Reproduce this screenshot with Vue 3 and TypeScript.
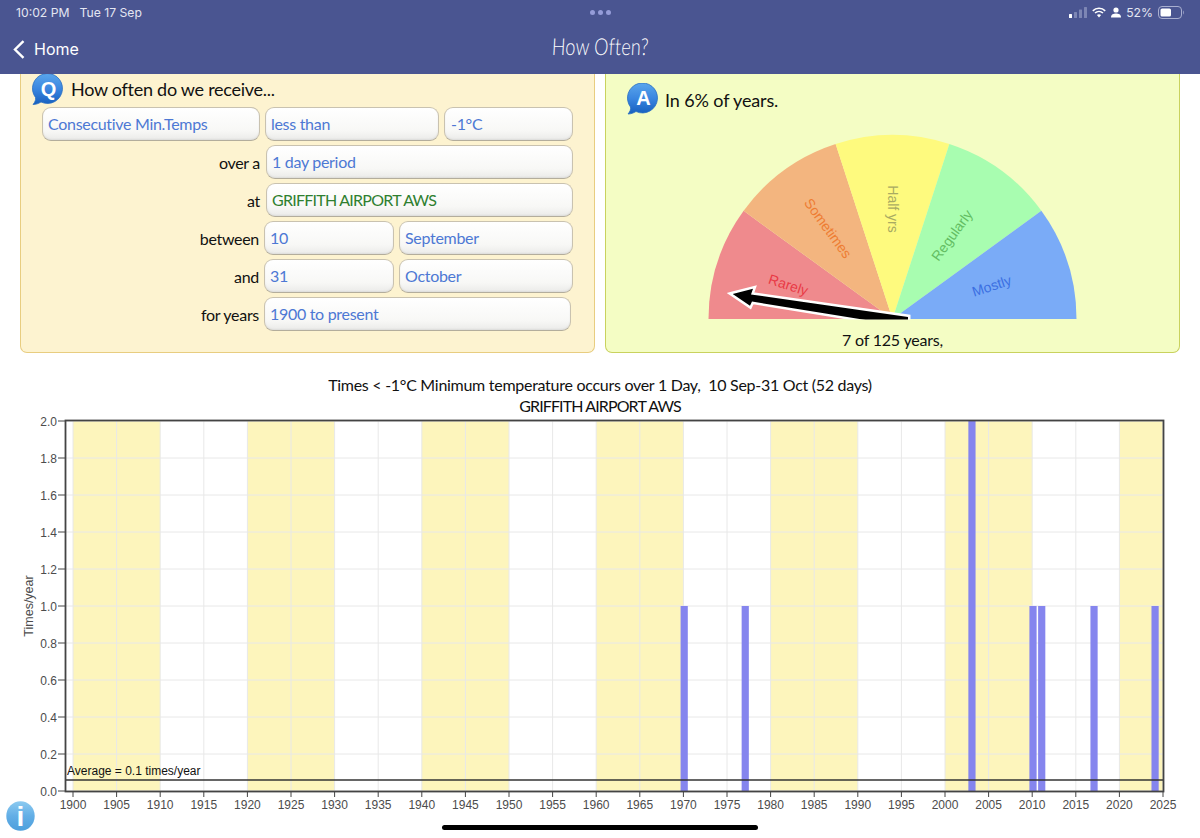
<script setup lang="ts">
const rad = Math.PI / 180;
const cx = 892.5, cy = 319, r = 184;

function wedge(i: number): string {
  const a0 = 180 - i * 36, a1 = a0 - 36;
  const x0 = cx + r * Math.cos(a0 * rad), y0 = cy - r * Math.sin(a0 * rad);
  const x1 = cx + r * Math.cos(a1 * rad), y1 = cy - r * Math.sin(a1 * rad);
  return `M${cx} ${cy}L${x0.toFixed(2)} ${y0.toFixed(2)}A${r} ${r} 0 0 1 ${x1.toFixed(2)} ${y1.toFixed(2)}Z`;
}

const wedges = [
  { fill: '#ef8a8d', label: 'Rarely', color: '#e93a46', x: 788, y: 286, rot: 18 },
  { fill: '#f3b57f', label: 'Sometimes', color: '#ee7d33', x: 827, y: 229, rot: 54 },
  { fill: '#fefa7e', label: 'Half yrs', color: '#a9aa62', x: 892, y: 209, rot: 90 },
  { fill: '#a8fdb0', label: 'Regularly', color: '#63bd63', x: 953, y: 236, rot: -54 },
  { fill: '#7aabf7', label: 'Mostly', color: '#3b6fe2', x: 992, y: 287, rot: -18 },
].map((w, i) => ({ ...w, d: wedge(i) }));

const x0 = 73, perYear = 8.72;
const yTop = 421, perTick = 37;
const xOf = (yr: number) => x0 + (yr - 1900) * perYear;

const years: number[] = [];
for (let y = 1900; y <= 2025; y += 5) years.push(y);

const stripes = [1900, 1920, 1940, 1960, 1980, 2000, 2020].map((y) => ({
  x: xOf(y),
  w: (Math.min(y + 10, 2025) - y) * perYear,
}));

const yTicks = Array.from({ length: 11 }, (_, i) => ({
  y: yTop + i * perTick,
  label: (2 - i * 0.2).toFixed(1),
}));

const bars = [
  { yr: 1970, top: 606 },
  { yr: 1977, top: 606 },
  { yr: 2003, top: 421 },
  { yr: 2010, top: 606 },
  { yr: 2011, top: 606 },
  { yr: 2017, top: 606 },
  { yr: 2024, top: 606 },
].map((b) => ({ x: xOf(b.yr) + 0.8 - 3.6, w: 7.2, y: b.top, h: 791 - b.top }));

const formRows = [
  { label: 'over a', fields: [{ text: '1 day period', cls: 'f-full' }], cls: 'r-a' },
  { label: 'at', fields: [{ text: 'GRIFFITH AIRPORT AWS', cls: 'f-full green' }], cls: 'r-a' },
  { label: 'between', fields: [{ text: '10', cls: 'f-s' }, { text: 'September', cls: 'f-m' }], cls: 'r-b' },
  { label: 'and', fields: [{ text: '31', cls: 'f-s' }, { text: 'October', cls: 'f-m' }], cls: 'r-b' },
  { label: 'for years', fields: [{ text: '1900 to present', cls: 'f-last' }], cls: 'r-b' },
];
</script>

<template>
  <div class="page">
    <header class="header">
      <div class="status">
        <div class="status-left"><span>10:02 PM</span><span>Tue 17 Sep</span></div>
        <div class="dots"><i></i><i></i><i></i></div>
        <div class="status-right">
          <svg width="18" height="11" viewBox="0 0 18 11">
            <rect x="0" y="7" width="3" height="4" rx="0.5" fill="#fff" />
            <rect x="5" y="5" width="3" height="6" rx="0.5" fill="#7d86b4" />
            <rect x="10" y="2.5" width="3" height="8.5" rx="0.5" fill="#7d86b4" />
            <rect x="15" y="0" width="3" height="11" rx="0.5" fill="#7d86b4" />
          </svg>
          <svg width="14" height="11" viewBox="0 0 14 11" fill="none" stroke="#fff" stroke-width="1.6">
            <path d="M0.8 3.8A9 9 0 0 1 13.2 3.8" />
            <path d="M3 6A6 6 0 0 1 11 6" />
            <path d="M7 10.6L4.9 8.1A3.2 3.2 0 0 1 9.1 8.1Z" fill="#fff" stroke="none" />
          </svg>
          <svg width="10" height="11" viewBox="0 0 10 11" fill="#fff">
            <circle cx="5" cy="3" r="2.6" />
            <path d="M0 10.5C0 7.5 2.5 6.6 5 6.6S10 7.5 10 10.5Z" />
          </svg>
          <span class="pct">52%</span>
          <svg width="26" height="13" viewBox="0 0 26 13">
            <rect x="0.5" y="0.5" width="23" height="12" rx="3.5" fill="none" stroke="#a9afd0" />
            <rect x="2.5" y="2.5" width="10.5" height="8" rx="1.6" fill="#fff" />
            <path d="M25 4.5C26 5 26 8 25 8.5Z" fill="#a9afd0" />
          </svg>
        </div>
      </div>
      <div class="nav">
        <div class="back">
          <svg width="12" height="19" viewBox="0 0 12 19" fill="none" stroke="#fff" stroke-width="2.4">
            <path d="M10.5 1.2L2 9.5L10.5 17.8" />
          </svg>
          <span>Home</span>
        </div>
        <div class="title">How Often?</div>
      </div>
    </header>

    <section class="panels">
      <div class="panel q-panel">
        <div class="q-head">
          <svg class="bubble" width="33" height="31" viewBox="0 0 33 31">
            <defs>
              <linearGradient id="bq" x1="0" y1="0" x2="0" y2="1">
                <stop offset="0" stop-color="#5aa6ec" />
                <stop offset="0.5" stop-color="#3a86e0" />
                <stop offset="1" stop-color="#165fbe" />
              </linearGradient>
            </defs>
            <path d="M1 30.5C3 28 4 26 3.5 23.5A15 15 0 1 1 9 28C6.5 29.5 4 30.5 1 30.5Z" fill="url(#bq)" stroke="#2a6ec2" stroke-width="0.8" />
            <text x="16.5" y="21.5" text-anchor="middle" class="bubble-text">Q</text>
          </svg>
          <span>How often do we receive...</span>
        </div>
        <div class="form-row r-first">
          <div class="field f-type">Consecutive Min.Temps</div>
          <div class="field f-op">less than</div>
          <div class="field f-val">-1°C</div>
        </div>
        <div v-for="row in formRows" :key="row.label" class="form-row" :class="row.cls">
          <span class="lab">{{ row.label }}</span>
          <div v-for="f in row.fields" :key="f.text" class="field" :class="f.cls">{{ f.text }}</div>
        </div>
      </div>

      <div class="panel a-panel">
        <div class="a-head">
          <svg class="bubble" width="33" height="32" viewBox="0 0 33 31">
            <defs>
              <linearGradient id="ba" x1="0" y1="0" x2="0" y2="1">
                <stop offset="0" stop-color="#5aa6ec" />
                <stop offset="0.5" stop-color="#3a86e0" />
                <stop offset="1" stop-color="#165fbe" />
              </linearGradient>
            </defs>
            <path d="M1 30.5C3 28 4 26 3.5 23.5A15 15 0 1 1 9 28C6.5 29.5 4 30.5 1 30.5Z" fill="url(#ba)" stroke="#2a6ec2" stroke-width="0.8" />
            <text x="16.5" y="21.5" text-anchor="middle" class="bubble-text">A</text>
          </svg>
          <span>In 6% of years.</span>
        </div>
        <svg class="gauge" width="573" height="205" viewBox="606 120 573 205">
          <defs>
            <clipPath id="gclip"><rect x="606" y="120" width="573" height="199.5" /></clipPath>
          </defs>
          <path v-for="w in wedges" :key="w.label" :d="w.d" :fill="w.fill" />
          <text
            v-for="w in wedges"
            :key="w.label + 't'"
            class="g-label"
            text-anchor="middle"
            dominant-baseline="middle"
            :fill="w.color"
            :transform="`translate(${w.x} ${w.y}) rotate(${w.rot})`"
          >{{ w.label }}</text>
          <g clip-path="url(#gclip)">
            <path
              d="M732.7 294L753 288.8L751 294.5L908 317L908 322L878 322L752 301.5L750 305.7Z"
              fill="#000"
              stroke="#fff"
              stroke-width="5"
              stroke-linejoin="miter"
              stroke-miterlimit="8"
              paint-order="stroke"
            />
          </g>
        </svg>
        <div class="years">7 of 125 years,</div>
      </div>
    </section>

    <section class="chart-title">
      <div>Times &lt; -1°C Minimum temperature occurs over 1 Day,&nbsp; 10 Sep-31 Oct (52 days)</div>
      <div class="station">GRIFFITH AIRPORT AWS</div>
    </section>

    <svg class="chart" width="1200" height="423" viewBox="0 415 1200 423">
      <rect v-for="s in stripes" :key="s.x" :x="s.x" y="421" :width="s.w" height="370" fill="#fdf5bc" />
      <line v-for="t in yTicks" :key="'h' + t.y" x1="65" :y1="t.y" x2="1163" :y2="t.y" class="grid" />
      <line v-for="y in years" :key="'v' + y" :x1="xOf(y)" y1="421" :x2="xOf(y)" y2="791" class="grid" />
      <rect v-for="b in bars" :key="b.x" :x="b.x" :y="b.y" :width="b.w" :height="b.h" fill="#8585ee" />
      <line x1="65" y1="780" x2="1163" y2="780" stroke="#333" stroke-width="1.4" />
      <text x="67" y="775" class="avg">Average = 0.1 times/year</text>
      <rect x="65.5" y="420.5" width="1098" height="371" fill="none" stroke="#444" stroke-width="1.8" />
      <g v-for="t in yTicks" :key="'yt' + t.y">
        <line x1="58" :y1="t.y" x2="65" :y2="t.y" stroke="#444" />
        <text x="57" :y="t.y + 4.5" text-anchor="end" class="tick">{{ t.label }}</text>
      </g>
      <g v-for="y in years" :key="'xt' + y">
        <line :x1="xOf(y)" y1="792" :x2="xOf(y)" y2="797" stroke="#444" />
        <text :x="xOf(y)" y="809" text-anchor="middle" class="tick">{{ y }}</text>
      </g>
      <text transform="translate(33 606) rotate(-90)" text-anchor="middle" class="axis">Times/year</text>
    </svg>

    <svg class="info" width="29" height="30" viewBox="0 0 29 30">
      <defs>
        <linearGradient id="bi" x1="0" y1="0" x2="0" y2="1">
          <stop offset="0" stop-color="#8ccaf0" />
          <stop offset="0.5" stop-color="#62aee6" />
          <stop offset="1" stop-color="#4d9fdc" />
        </linearGradient>
      </defs>
      <ellipse cx="14.5" cy="15" rx="14.2" ry="14.7" fill="url(#bi)" />
      <text x="14.5" y="25" text-anchor="middle" class="info-text">i</text>
    </svg>
    <div class="home-bar"></div>
  </div>
</template>

<style>
html, body { margin: 0; background: #fff; }
</style>

<style scoped>
.page {
  position: relative;
  width: 1200px;
  height: 838px;
  overflow: hidden;
  background: #fff;
  display: flex;
  flex-direction: column;
  font-family: "Lato", "Noto Sans", sans-serif;
  color: #111;
}
.header {
  height: 74px;
  flex: none;
  background: #4a5591;
  color: #fff;
  display: flex;
  flex-direction: column;
  box-sizing: border-box;
}
.status {
  height: 24px;
  display: grid;
  grid-template-columns: 1fr auto 1fr;
  align-items: center;
  padding: 0 16px;
  font-family: "Inter", "Liberation Sans", sans-serif;
  font-size: 12.2px;
  color: #e4e6f2;
}
.status-left { display: flex; gap: 10px; }
.status-right { display: flex; align-items: center; justify-content: flex-end; gap: 5px; }
.dots { display: flex; gap: 3px; }
.dots i { width: 5px; height: 5px; border-radius: 50%; background: #959cd8; display: block; }
.nav {
  flex: 1;
  position: relative;
  display: flex;
  align-items: flex-start;
  justify-content: center;
}
.back {
  position: absolute;
  left: 13px;
  top: 15px;
  display: flex;
  align-items: center;
  gap: 9px;
  font-family: "Inter", "Liberation Sans", sans-serif;
  font-size: 16px;
}
.title {
  font-family: "Lato", sans-serif;
  font-weight: 300;
  font-size: 18px;
  line-height: 22px;
  letter-spacing: 0.2px;
  transform: scaleY(1.3) skewX(-4deg);
  margin-top: 11px;
}
.panels {
  display: flex;
  gap: 10px;
  padding: 0 20px;
  height: 279px;
  flex: none;
}
.panel {
  flex: 1 1 0;
  min-width: 0;
  box-sizing: border-box;
  border: 1px solid;
  border-top: none;
  border-radius: 0 0 7px 7px;
}
.q-panel { background: #fdf3d0; border-color: #e8cd80; }
.a-panel { background: #f4fdc4; border-color: #c9d25e; }
.q-head {
  height: 33px;
  display: flex;
  align-items: flex-start;
  gap: 6px;
  padding-left: 11px;
  font-size: 18px;
  line-height: 30px;
  letter-spacing: -0.27px;
}
.a-head {
  height: 46px;
  display: flex;
  align-items: flex-start;
  gap: 5px;
  padding: 9px 0 0 21px;
  box-sizing: border-box;
  font-size: 18px;
  line-height: 34px;
  letter-spacing: -0.13px;
}
.bubble { flex: none; }
.bubble-text {
  font-family: "Liberation Sans", sans-serif;
  font-weight: 700;
  font-size: 20px;
  fill: #fff;
}
.form-row {
  display: flex;
  align-items: center;
  gap: 5px;
  height: 34px;
  margin-bottom: 4px;
  font-size: 16px;
  letter-spacing: -0.3px;
}
.r-first { padding-left: 21px; }
.lab { text-align: right; flex: none; }
.r-a { gap: 6px; }
.r-a .lab { width: 239px; }
.r-b .lab { width: 238px; }
.field {
  box-sizing: border-box;
  height: 34px;
  line-height: 32px;
  padding-left: 5px;
  border: 1px solid #c9c2b0;
  border-bottom-color: #b3ad9c;
  border-radius: 9px;
  background: linear-gradient(#ffffff, #f8f8f6 70%, #ebebe9);
  box-shadow: inset 0 -1px 2px rgba(0, 0, 0, 0.07);
  color: #4d78d4;
  font-size: 16px;
  flex: none;
}
.f-type { width: 218px; }
.f-op { width: 174px; }
.f-val { width: 129px; padding-left: 6px; }
.f-full { width: 307px; }
.f-s { width: 130px; }
.f-m { width: 174px; }
.f-last { width: 307px; }
.green { color: #2f7f2f; letter-spacing: -0.75px; }
.gauge { display: block; }
.years {
  text-align: center;
  font-size: 16px;
  line-height: 20px;
  margin-top: 5px;
  letter-spacing: -0.2px;
}
.g-label { font-family: "Liberation Sans", sans-serif; font-size: 14px; }
.chart-title {
  height: 62px;
  flex: none;
  box-sizing: border-box;
  padding-top: 21px;
  text-align: center;
  font-size: 16px;
  line-height: 21px;
  letter-spacing: -0.28px;
}
.station { letter-spacing: -0.88px; }
.chart { display: block; flex: none; }
.grid { stroke: #e8e8e8; stroke-width: 1; }
.tick { font-family: "Liberation Sans", sans-serif; font-size: 12px; fill: #4c4c4c; }
.axis { font-family: "Liberation Sans", sans-serif; font-size: 12.5px; fill: #4c4c4c; }
.avg { font-family: "Liberation Sans", sans-serif; font-size: 12px; fill: #111; }
.info { position: absolute; left: 6px; top: 801px; }
.info-text {
  font-family: "Liberation Sans", sans-serif;
  font-weight: 700;
  font-size: 28px;
  fill: #fff;
}
.home-bar {
  position: absolute;
  left: 442px;
  top: 825px;
  width: 316px;
  height: 5px;
  border-radius: 3px;
  background: #000;
}
</style>
